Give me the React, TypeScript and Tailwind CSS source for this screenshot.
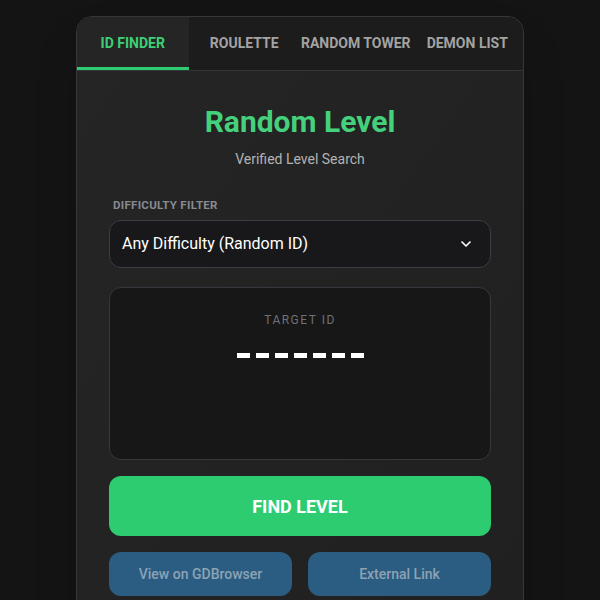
import { ChevronDown } from 'lucide-react'

const tabs = ['ID FINDER', 'ROULETTE', 'RANDOM TOWER', 'DEMON LIST']

export default function App() {
  return (
    <div
      className="min-h-[600px] h-[600px] overflow-hidden bg-[#141414] flex justify-center pt-4"
      style={{ fontFamily: 'Roboto, "Liberation Sans", sans-serif' }}
    >
      <div className="w-[448px] h-[640px] rounded-t-2xl border border-[#34373c] bg-gradient-to-br from-[#252525] to-[#202020] overflow-hidden shadow-2xl">
        {/* Tabs */}
        <div className="grid grid-cols-4 h-[54px] bg-[#1c1c1c] border-b border-[#33363b]">
          {tabs.map((t, i) => (
            <div
              key={t}
              className={`flex items-center justify-center text-[14px] font-bold whitespace-nowrap ${
                i === 0
                  ? 'bg-[#252525] text-[#3fcf76] border-b-[3px] border-[#2ecc71] pt-[3px]'
                  : 'text-[#a3a3a3]'
              }`}
            >
              {t}
            </div>
          ))}
        </div>

        {/* Body */}
        <div className="px-8 pt-[33px]">
          <h1 className="text-center text-[30px] leading-[36px] font-bold text-[#45d17b]">Random Level</h1>
          <p className="text-center text-[14px] text-[#b3b3b3] mt-[9px]">Verified Level Search</p>

          <div className="mt-[27px] pl-1 text-[11.5px] font-bold tracking-[0.3px] text-[#878b91]">DIFFICULTY FILTER</div>
          <div className="mt-[6px] h-[48px] rounded-xl border border-[#3b3f46] bg-[#18181a] flex items-center justify-between px-3">
            <span className="text-[16px] text-white">Any Difficulty (Random ID)</span>
            <ChevronDown className="w-4 h-4 text-white mr-[4px]" strokeWidth={2.5} />
          </div>

          <div className="mt-[19px] h-[173px] rounded-xl border border-[#34383f] bg-[#171717] flex flex-col items-center">
            <div className="mt-[23px] text-[12px] tracking-[1.5px] text-[#6e7176]">TARGET ID</div>
            <div className="mt-[24px] flex gap-[6px]">
              {Array.from({ length: 7 }).map((_, i) => (
                <span key={i} className="block w-[13px] h-[5px] bg-white" />
              ))}
            </div>
          </div>

          <button className="mt-[16px] w-full h-[60px] rounded-xl bg-[#2ecc71] text-white text-[18px] font-bold">
            FIND LEVEL
          </button>

          <div className="mt-[16px] grid grid-cols-2 gap-4">
            <button className="h-[44px] rounded-xl bg-[#2b5d83] text-[#8da2b3] text-[14px] font-medium">View on GDBrowser</button>
            <button className="h-[44px] rounded-xl bg-[#2b5d83] text-[#8da2b3] text-[14px] font-medium">External Link</button>
          </div>
        </div>
      </div>
    </div>
  )
}
